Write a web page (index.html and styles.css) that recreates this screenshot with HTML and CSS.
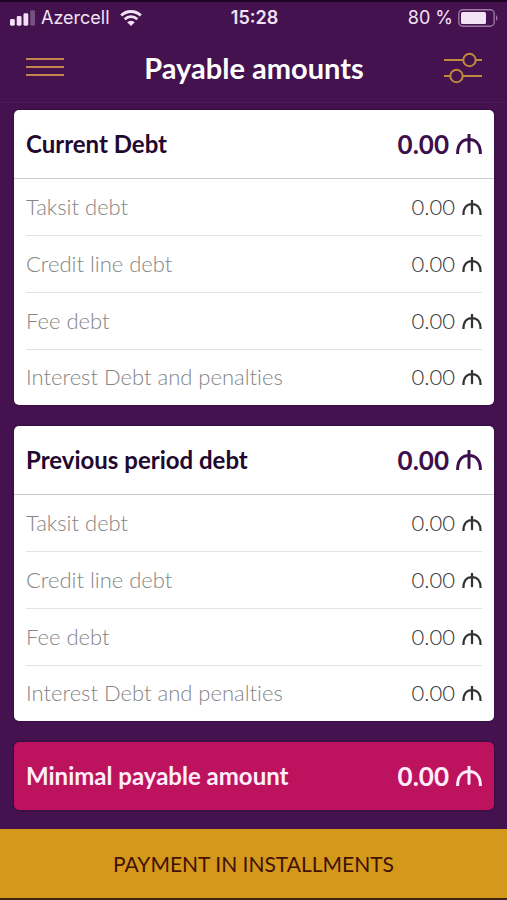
FILE: index.html
```html
<!DOCTYPE html>
<html lang="en">
<head>
<meta charset="utf-8">
<meta name="viewport" content="width=device-width, initial-scale=1">
<title>Payable amounts</title>
<link rel="stylesheet" href="styles.css">
</head>
<body>
<svg class="defs" aria-hidden="true">
  <symbol id="manat" viewBox="0 0 26 20">
    <path d="M1.6 19.5C1.6 10.500 6 5.500 13 5.500S24.400 10.500 24.400 19.500M13 0.800v16.700" stroke-linecap="round"/>
  </symbol>
</svg>
<div class="screen">
  <div class="status">
    <div class="status-left">
      <svg class="signal" viewBox="0 0 26 16" aria-hidden="true">
        <rect x="0" y="9" width="5" height="7" rx="1.5"/>
        <rect x="7" y="6" width="5" height="10" rx="1.5"/>
        <rect x="14" y="3" width="5" height="13" rx="1.5"/>
        <rect x="21" y="0" width="5" height="16" rx="1.5" opacity=".3"/>
      </svg>
      <span>Azercell</span>
      <svg class="wifi" viewBox="0 0 22 16" aria-hidden="true">
        <path d="M1.2 5.5a14 14 0 0 1 19.6 0M4.700 9.200a9 9 0 0 1 12.600 0" fill="none" stroke="currentColor" stroke-width="2.8"/>
        <path d="M11 16L7.200 12.200a5.400 5.400 0 0 1 7.600 0z"/>
      </svg>
    </div>
    <span class="time">15:28</span>
    <div class="status-right">
      <span>80 %</span>
      <svg class="battery" viewBox="0 0 41 18" aria-hidden="true">
        <rect x=".8" y=".8" width="35.4" height="16.4" rx="4" fill="none" stroke="currentColor" stroke-width="1.4" opacity=".5"/>
        <rect x="3" y="3" width="25" height="12" rx="1.5"/>
        <path d="M38 6q3 3 0 6z" opacity=".5"/>
      </svg>
    </div>
  </div>
  <header class="bar">
    <button class="icon-button" type="button" aria-label="Menu">
      <svg viewBox="0 0 38 32" aria-hidden="true"><path d="M0 7h38M0 15h38M0 23h38" class="menu-lines"/></svg>
    </button>
    <h1>Payable amounts</h1>
    <button class="icon-button" type="button" aria-label="Filters">
      <svg viewBox="0 0 38 32" aria-hidden="true"><path d="M0 8h19M32 8h6M0 24h6M19 24h19"/><circle cx="25.5" cy="8" r="6.2"/><circle cx="12.5" cy="24" r="6.2"/></svg>
    </button>
  </header>
  <main>
    <section class="card">
      <div class="head"><h2>Current Debt</h2><span class="sum">0.00 <svg aria-label="manat"><use href="#manat"/></svg></span></div>
      <dl>
        <div class="row"><dt>Taksit debt</dt><dd>0.00 <svg aria-label="manat"><use href="#manat"/></svg></dd></div>
        <div class="row"><dt>Credit line debt</dt><dd>0.00 <svg aria-label="manat"><use href="#manat"/></svg></dd></div>
        <div class="row"><dt>Fee debt</dt><dd>0.00 <svg aria-label="manat"><use href="#manat"/></svg></dd></div>
        <div class="row"><dt>Interest Debt and penalties</dt><dd>0.00 <svg aria-label="manat"><use href="#manat"/></svg></dd></div>
      </dl>
    </section>
    <section class="card">
      <div class="head"><h2>Previous period debt</h2><span class="sum">0.00 <svg aria-label="manat"><use href="#manat"/></svg></span></div>
      <dl>
        <div class="row"><dt>Taksit debt</dt><dd>0.00 <svg aria-label="manat"><use href="#manat"/></svg></dd></div>
        <div class="row"><dt>Credit line debt</dt><dd>0.00 <svg aria-label="manat"><use href="#manat"/></svg></dd></div>
        <div class="row"><dt>Fee debt</dt><dd>0.00 <svg aria-label="manat"><use href="#manat"/></svg></dd></div>
        <div class="row"><dt>Interest Debt and penalties</dt><dd>0.00 <svg aria-label="manat"><use href="#manat"/></svg></dd></div>
      </dl>
    </section>
    <section class="card total">
      <div class="head"><h2>Minimal payable amount</h2><span class="sum">0.00 <svg aria-label="manat"><use href="#manat"/></svg></span></div>
    </section>
  </main>
  <button class="pay" type="button">PAYMENT IN INSTALLMENTS</button>
</div>
</body>
</html>
```
FILE: styles.css
```css
* {
  box-sizing: border-box;
}

body {
  margin: 0;
  background: #43124f;
  color: #fff;
  font-family: Lato, "Liberation Sans", sans-serif;
  font-variant-ligatures: none;
}

h1, h2, dl, dd {
  margin: 0;
}

.defs {
  display: none;
}

.screen {
  display: flex;
  flex-direction: column;
  min-height: 100vh;
  border-top: 2px solid #1e0526;
  border-bottom: 2px solid #3d2414;
}

.status {
  display: grid;
  grid-template-columns: 1fr auto 1fr;
  align-items: center;
  height: 32px;
  padding: 0 8px 0 10px;
  color: #f3e2f6;
  font: 18px/24px Inter, sans-serif;
}

.status svg {
  fill: currentColor;
}

.status-left, .status-right {
  display: flex;
  align-items: center;
}

.status-left {
  gap: 6px;
}

.status-right {
  justify-content: flex-end;
  gap: 5px;
}

.signal {
  width: 25px;
  height: 16px;
}

.wifi {
  width: 22px;
  height: 16px;
  margin-left: 4px;
}

.battery {
  width: 41px;
  height: 18px;
}

.time {
  font-weight: 600;
}

.bar {
  display: flex;
  align-items: center;
  justify-content: space-between;
  height: 69px;
  padding: 0 25px 0 26px;
  border-bottom: 1px solid #4d1a5a;
}

h1 {
  font-size: 29px;
  line-height: 36px;
  font-weight: 700;
}

.icon-button {
  display: flex;
  padding: 0;
  border: 0;
  background: none;
}

.icon-button svg {
  width: 38px;
  height: 32px;
  fill: none;
  stroke: #c08a3c;
  stroke-width: 2;
}

.icon-button .menu-lines {
  stroke: #c48450;
}

main {
  display: flex;
  flex: 1;
  flex-direction: column;
  gap: 21px;
  padding: 7px 13px 19px 14px;
}

.card {
  border-radius: 5px;
  background: #fff;
  box-shadow: 0 0 2px #220629;
  color: #22082e;
}

.head, .row {
  display: flex;
  align-items: center;
  justify-content: space-between;
}

.head {
  height: 69px;
  padding: 0 12px;
  border-bottom: 1px solid #ccc;
}

h2 {
  font-size: 24px;
  line-height: 32px;
  font-weight: 700;
}

.sum, dd {
  display: flex;
  align-items: baseline;
}

.card svg {
  fill: none;
  stroke: currentColor;
}

.sum {
  gap: 7px;
  color: #3d0f4c;
  font-size: 26px;
  line-height: 32px;
  font-weight: 700;
}

.sum svg {
  width: 26px;
  height: 20px;
  stroke-width: 3;
}

dl {
  padding: 0 12px;
}

.row {
  height: 57px;
  padding-bottom: 1px;
  border-bottom: 1px solid #e2e2e2;
}

.row:last-child {
  height: 55px;
  border-bottom: 0;
}

dt, dd {
  font-size: 22px;
  line-height: 32px;
  font-weight: 300;
}

dt {
  color: #858585;
}

dd {
  gap: 7px;
  color: #333;
}

dd svg {
  width: 20px;
  height: 15px;
  stroke-width: 3;
}

.total {
  background: #bd135f;
  color: #ffeefa;
}

.total .head {
  height: 68px;
  border-bottom: 0;
}

.total .sum {
  color: inherit;
}

.pay {
  height: 69px;
  border: 0;
  background: #d4991b;
  color: #421108;
  font: 21px/32px Lato, "Liberation Sans", sans-serif;
}
```
